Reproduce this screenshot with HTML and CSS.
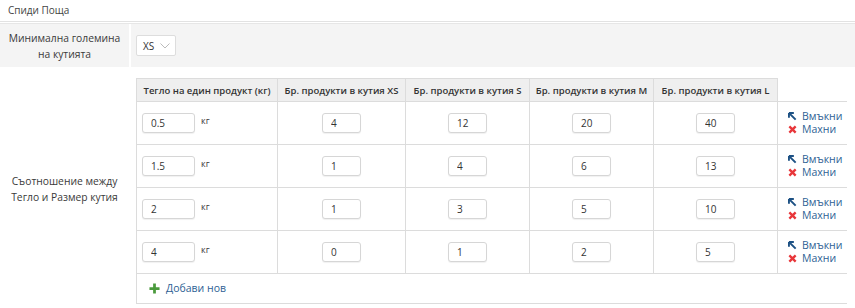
FILE: index.html
```html
<!doctype html>
<html>
  <head>
    <title>Спиди Поща</title>
    <link rel="stylesheet" href="styles.css">
  </head>
  <body>
    <div class="tab">Спиди Поща</div>
    <div class="form">
      <div class="formRow gray">
        <div class="label">Минимална големина<br>на кутията</div>
        <div class="field">
          <div class="select">XS
            <svg width="10" height="6" viewBox="0 0 10 6"><path d="M0.5 0.5 L5 5 L9.5 0.5" fill="none" stroke="#bbb" stroke-width="1"/></svg>
          </div>
        </div>
      </div>
      <div class="formRow">
        <div class="label">Съотношение между<br>Тегло и Размер кутия</div>
        <div class="field pad">
          <table class="sizes">
            <thead>
              <tr>
                <th class="c1">Тегло на един продукт (кг)</th>
                <th class="c2">Бр. продукти в кутия XS</th>
                <th class="c3">Бр. продукти в кутия S</th>
                <th class="c3">Бр. продукти в кутия M</th>
                <th class="c3">Бр. продукти в кутия L</th>
                <th class="act"></th>
              </tr>
            </thead>
            <tbody>
              <tr>
                <td class="w"><input class="big" value="0.5"><span class="unit">кг</span></td>
                <td><input class="small" value="4"></td>
                <td><input class="small" value="12"></td>
                <td><input class="small" value="20"></td>
                <td><input class="small" value="40"></td>
                <td class="act">
                  <a class="link"><svg class="ico" viewBox="0 0 10 10"><path d="M1.5 1.5 L8.5 8.5 M1 1 L1 6.5 M1 1 L6.5 1" stroke="#1d5184" stroke-width="2.2" fill="none"/></svg>Вмъкни</a>
                  <a class="link"><svg class="ico" viewBox="0 0 10 10"><path d="M1.5 1.5 L8.5 8.5 M8.5 1.5 L1.5 8.5" stroke="#e8363a" stroke-width="2.6" fill="none"/></svg>Махни</a>
                </td>
              </tr>
              <tr>
                <td class="w"><input class="big" value="1.5"><span class="unit">кг</span></td>
                <td><input class="small" value="1"></td>
                <td><input class="small" value="4"></td>
                <td><input class="small" value="6"></td>
                <td><input class="small" value="13"></td>
                <td class="act">
                  <a class="link"><svg class="ico" viewBox="0 0 10 10"><path d="M1.5 1.5 L8.5 8.5 M1 1 L1 6.5 M1 1 L6.5 1" stroke="#1d5184" stroke-width="2.2" fill="none"/></svg>Вмъкни</a>
                  <a class="link"><svg class="ico" viewBox="0 0 10 10"><path d="M1.5 1.5 L8.5 8.5 M8.5 1.5 L1.5 8.5" stroke="#e8363a" stroke-width="2.6" fill="none"/></svg>Махни</a>
                </td>
              </tr>
              <tr>
                <td class="w"><input class="big" value="2"><span class="unit">кг</span></td>
                <td><input class="small" value="1"></td>
                <td><input class="small" value="3"></td>
                <td><input class="small" value="5"></td>
                <td><input class="small" value="10"></td>
                <td class="act">
                  <a class="link"><svg class="ico" viewBox="0 0 10 10"><path d="M1.5 1.5 L8.5 8.5 M1 1 L1 6.5 M1 1 L6.5 1" stroke="#1d5184" stroke-width="2.2" fill="none"/></svg>Вмъкни</a>
                  <a class="link"><svg class="ico" viewBox="0 0 10 10"><path d="M1.5 1.5 L8.5 8.5 M8.5 1.5 L1.5 8.5" stroke="#e8363a" stroke-width="2.6" fill="none"/></svg>Махни</a>
                </td>
              </tr>
              <tr>
                <td class="w"><input class="big" value="4"><span class="unit">кг</span></td>
                <td><input class="small" value="0"></td>
                <td><input class="small" value="1"></td>
                <td><input class="small" value="2"></td>
                <td><input class="small" value="5"></td>
                <td class="act">
                  <a class="link"><svg class="ico" viewBox="0 0 10 10"><path d="M1.5 1.5 L8.5 8.5 M1 1 L1 6.5 M1 1 L6.5 1" stroke="#1d5184" stroke-width="2.2" fill="none"/></svg>Вмъкни</a>
                  <a class="link"><svg class="ico" viewBox="0 0 10 10"><path d="M1.5 1.5 L8.5 8.5 M8.5 1.5 L1.5 8.5" stroke="#e8363a" stroke-width="2.6" fill="none"/></svg>Махни</a>
                </td>
              </tr>
            </tbody>
            <tfoot>
              <tr>
                <td colspan="6" class="add">
                  <a class="link addLink"><svg class="plus" viewBox="0 0 12 12"><path d="M6 0.5 L6 11.5 M0.5 6 L11.5 6" stroke="#4a9a3c" stroke-width="3" fill="none"/></svg>Добави нов</a>
                </td>
              </tr>
            </tfoot>
          </table>
        </div>
      </div>
    </div>
  </body>
</html>
```

FILE: styles.css
```css
body {
  margin:             0;
  background-color:   #fff;
  font-family:        "Open Sans", "Noto Sans", sans-serif;
  font-size:          10.3px;
  color:              #333;
}
.tab {
  height:             21px;
  line-height:        21px;
  padding-left:       8px;
  font-size:          10px;
  color:              #444;
  border-bottom:      1px solid #e2e2e2;
}
.form {
  border-top:         1px solid #e6e6e6;
  margin-top:         1px;
}
.formRow {
  display:            flex;
  align-items:        stretch;
}
.formRow.gray {
  background-color:   #f4f4f4;
  height:             43px;
  border-bottom:      1px solid #fff;
}
.label {
  width:              129px;
  flex:               none;
  display:            flex;
  align-items:        center;
  justify-content:    center;
  text-align:         center;
  line-height:        16px;
  color:              #3a3a3a;
  border-right:       2px solid #fff;
}
.field {
  flex:               1;
  display:            flex;
  align-items:        center;
  padding-left:       5px;
}
.field.pad {
  padding:            10px 0 6px 5px;
}
.select {
  border:             1px solid #ddd;
  border-radius:      2px;
  background-color:   #fff;
  display:            flex;
  align-items:        center;
  justify-content:    space-between;
  padding:            0 5px 0 6px;
  box-sizing:         border-box;
  width:              40px;
  height:             21px;
  font-size:          10px;
  color:              #333;
}
.sizes {
  border-collapse:    collapse;
  table-layout:       fixed;
  width:              711px;
}
.sizes th {
  background-color:   #efefef;
  border:             1px solid #dcdcdc;
  height:             22px;
  padding:            0;
  font-size:          9.5px;
  font-weight:        600;
  color:              #333;
  white-space:        nowrap;
}
.sizes th.act {
  background-color:   #fff;
  border:             none;
  border-left:        1px solid #dcdcdc;
}
.c1 { width: 140px; }
.c2 { width: 127px; }
.c3 { width: 123px; }
.act { width: 69px; }
.sizes td {
  border:             1px solid #dcdcdc;
  height:             42px;
  padding:            0;
  text-align:         center;
  vertical-align:     middle;
}
.sizes td.act {
  border-right:       none;
  text-align:         left;
  padding-left:       10px;
}
.sizes td.w {
  text-align:         left;
  padding-left:       5px;
  white-space:        nowrap;
}
input {
  height:             20px;
  box-sizing:         border-box;
  border:             1px solid #d6d6d6;
  border-radius:      3px;
  box-shadow:         0 1px 1px rgba(0, 0, 0, 0.06);
  font-family:        inherit;
  font-size:          10px;
  color:              #333;
  padding:            0 0 0 8px;
  vertical-align:     middle;
}
input.big {
  width:              53px;
}
input.small {
  width:              39px;
}
.unit {
  font-size:          9px;
  margin-left:        6px;
  vertical-align:     top;
  position:           relative;
  top:                1px;
  color:              #3a3a3a;
}
.link {
  display:            flex;
  align-items:        center;
  color:              #2e5f94;
  font-size:          10.5px;
  line-height:        13px;
}
.ico {
  width:              9px;
  height:             9px;
  margin-right:       5px;
}
.sizes td.add {
  height:             29px;
  text-align:         left;
  padding-left:       12px;
  border-right:       none;
}
.plus {
  width:              11px;
  height:             11px;
  margin-right:       6px;
}
```
